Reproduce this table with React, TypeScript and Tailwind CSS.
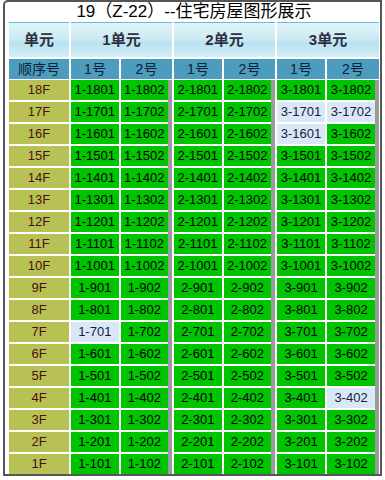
import React from 'react';

const units = [1, 2, 3];
const floors = Array.from({ length: 18 }, (_, i) => 18 - i);
// rooms shown in light blue (not green)
const pale = new Set(['3-1701', '3-1702', '3-1601', '1-701', '3-402']);

const font = { fontFamily: '"Liberation Sans", "Noto Sans CJK SC", sans-serif' };

function HeadCell({ children }: { children: React.ReactNode }) {
    return (
        <div className="h-[35px] border-t border-[#5bc3e0] bg-[linear-gradient(180deg,#e3f4fa_0%,#cdebf5_45%,#b9e2f0_60%,#d4eef7_100%)] flex items-center justify-center text-[15px] font-bold text-[#2f2f3f]">
            {children}
        </div>
    );
}

function UnitColumn({ unit, width }: { unit: number; width: string }) {
    return (
        <div className={`flex flex-col ${width}`}>
            <HeadCell>{unit}单元</HeadCell>
            <div className="mt-[2px] flex gap-[2px] h-[20px]">
                <div className="w-[48px] bg-[#4b9cbd] flex items-center justify-center text-[14px] text-[#10203a]">1号</div>
                <div className="flex-1 bg-[#4b9cbd] flex items-center justify-center text-[14px] text-[#10203a]">2号</div>
            </div>
            <div className="mt-[1px] flex">
                <div className="flex-1 flex flex-col gap-[2px]">
                    {floors.map(f => (
                        <div key={f} className="flex gap-[2px] h-[20px]">
                            {[1, 2].map(n => {
                                const code = `${unit}-${f}0${n}`;
                                return (
                                    <div
                                        key={n}
                                        className={`flex-1 flex items-center justify-center text-[13px] ${pale.has(code) ? 'bg-[#d8e8f7] text-[#1a1a40]' : 'bg-[#00c400] text-black'}`}
                                    >
                                        {code}
                                    </div>
                                );
                            })}
                        </div>
                    ))}
                </div>
                <div className="w-[4px] bg-[#9b9b9b]" />
            </div>
        </div>
    );
}

export default function App() {
    return (
        <div className="w-[385px] h-[480px] bg-white" style={font}>
            <div className="ml-[3px] w-[379px] h-[476px] border-2 border-[#555] rounded-tl-[5px] pl-[4px] pr-[1px]">
                {/* Title */}
                <div className="h-[20px] text-center text-[17px] leading-[20px] text-black">19（Z-22）--住宅房屋图形展示</div>

                <div className="flex gap-[2px]">
                    {/* Floor column */}
                    <div className="w-[60px] flex flex-col">
                        <HeadCell>单元</HeadCell>
                        <div className="mt-[2px] h-[20px] bg-[#4b9cbd] flex items-center justify-center text-[14px] text-[#10203a]">顺序号</div>
                        <div className="mt-[1px] flex flex-col gap-[2px]">
                            {floors.map(f => (
                                <div key={f} className="h-[20px] bg-[#b8c254] flex items-center justify-center text-[13px] text-[#4a1010]">
                                    {f}F
                                </div>
                            ))}
                        </div>
                    </div>
                    <UnitColumn unit={units[0]} width="w-[101px]" />
                    <UnitColumn unit={units[1]} width="w-[101px]" />
                    <UnitColumn unit={units[2]} width="w-[102px]" />
                </div>
            </div>
        </div>
    );
}
